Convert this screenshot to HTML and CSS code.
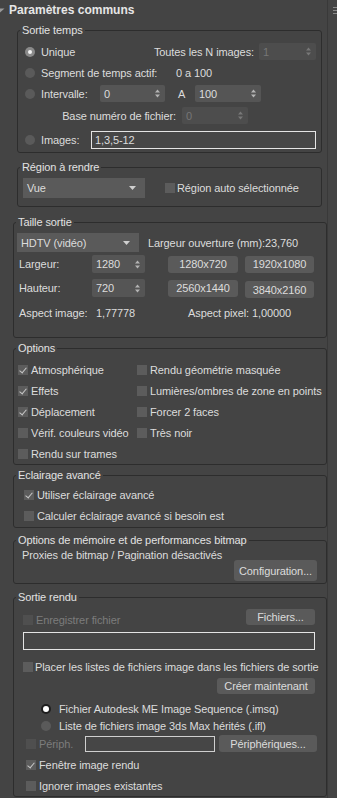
FILE: index.html
```html
<!DOCTYPE html>
<html lang="fr">
<head>
<meta charset="utf-8">
<title>Paramètres communs</title>
<link rel="stylesheet" href="styles.css">
</head>
<body>
<div class="panel">
  <div class="main">
    <div class="roll-head">
      <svg class="tri" width="5" height="5" viewBox="0 0 5 5"><path d="M0 0.5 L4.5 0.5 L0 4.5 Z" fill="#9a9a9a"/></svg>
      <span class="roll-title">Paramètres communs</span>
    </div>

    <fieldset class="grp narrow">
      <legend>Sortie temps</legend>
      <div class="gbody time">
        <div class="row h21">
          <span class="radio soft"></span><span class="lbl">Unique</span>
          <span class="push">Toutes les N images:</span>
          <span class="spin dis w57"><span class="val">1</span><svg class="arr" width="5" height="9" viewBox="0 0 5 9"><path d="M0 3.5 L2.5 0.5 L5 3.5 Z M0 5.5 L2.5 8.5 L5 5.5 Z"/></svg></span>
        </div>
        <div class="row h21">
          <span class="radio"></span><span class="lbl w135">Segment de temps actif:</span>
          <span>0 a 100</span>
        </div>
        <div class="row h21">
          <span class="radio"></span><span class="lbl w59">Intervalle:</span>
          <span class="spin w65"><span class="val">0</span><svg class="arr" width="5" height="9" viewBox="0 0 5 9"><path d="M0 3.5 L2.5 0.5 L5 3.5 Z M0 5.5 L2.5 8.5 L5 5.5 Z"/></svg></span>
          <span class="a-lbl">A</span>
          <span class="spin w66"><span class="val">100</span><svg class="arr" width="5" height="9" viewBox="0 0 5 9"><path d="M0 3.5 L2.5 0.5 L5 3.5 Z M0 5.5 L2.5 8.5 L5 5.5 Z"/></svg></span>
        </div>
        <div class="row h23 base">
          <span class="base-lbl">Base numéro de fichier:</span>
          <span class="spin dis w66"><span class="val">0</span><svg class="arr" width="5" height="9" viewBox="0 0 5 9"><path d="M0 3.5 L2.5 0.5 L5 3.5 Z M0 5.5 L2.5 8.5 L5 5.5 Z"/></svg></span>
        </div>
        <div class="row img-row">
          <span class="radio"></span><span class="lbl w50">Images:</span>
          <span class="field grow">1,3,5-12</span>
        </div>
      </div>
    </fieldset>

    <fieldset class="grp narrow g-region">
      <legend>Région à rendre</legend>
      <div class="gbody region">
        <div class="row">
          <span class="drop w122">Vue<svg class="dd" width="7" height="4" viewBox="0 0 7 4"><path d="M0 0 L7 0 L3.5 4 Z"/></svg></span>
          <span class="check region-check"></span><span class="clbl">Région auto sélectionnée</span>
        </div>
      </div>
    </fieldset>

    <fieldset class="grp wide g-size">
      <legend>Taille sortie</legend>
      <div class="gbody size">
        <div class="row">
          <span class="drop w122 h19">HDTV (vidéo)<svg class="dd" width="7" height="4" viewBox="0 0 7 4"><path d="M0 0 L7 0 L3.5 4 Z"/></svg></span>
          <span class="aperture">Largeur ouverture (mm):23,760</span>
        </div>
        <div class="size-grid r-w">
          <span>Largeur:</span>
          <span class="spin"><span class="val">1280</span><svg class="arr" width="5" height="9" viewBox="0 0 5 9"><path d="M0 3.5 L2.5 0.5 L5 3.5 Z M0 5.5 L2.5 8.5 L5 5.5 Z"/></svg></span>
          <span></span>
          <span class="btn">1280x720</span>
          <span></span>
          <span class="btn">1920x1080</span>
        </div>
        <div class="size-grid r-h">
          <span>Hauteur:</span>
          <span class="spin"><span class="val">720</span><svg class="arr" width="5" height="9" viewBox="0 0 5 9"><path d="M0 3.5 L2.5 0.5 L5 3.5 Z M0 5.5 L2.5 8.5 L5 5.5 Z"/></svg></span>
          <span></span>
          <span class="btn">2560x1440</span>
          <span></span>
          <span class="btn low">3840x2160</span>
        </div>
        <div class="row aspect">
          <span class="asp-lbl">Aspect image:</span><span class="asp-val">1,77778</span>
          <span>Aspect pixel: 1,00000</span>
        </div>
      </div>
    </fieldset>

    <fieldset class="grp wide g-opt">
      <legend>Options</legend>
      <div class="gbody opts">
        <div class="opt-grid">
          <span class="citem"><span class="check on"></span>Atmosphérique</span>
          <span class="citem"><span class="check"></span>Rendu géométrie masquée</span>
          <span class="citem"><span class="check on"></span>Effets</span>
          <span class="citem"><span class="check"></span>Lumières/ombres de zone en points</span>
          <span class="citem"><span class="check on"></span>Déplacement</span>
          <span class="citem"><span class="check"></span>Forcer 2 faces</span>
          <span class="citem"><span class="check"></span>Vérif. couleurs vidéo</span>
          <span class="citem"><span class="check"></span>Très noir</span>
          <span class="citem"><span class="check"></span>Rendu sur trames</span>
        </div>
      </div>
    </fieldset>

    <fieldset class="grp wide g-adv">
      <legend>Eclairage avancé</legend>
      <div class="gbody adv">
        <span class="citem"><span class="check on"></span>Utiliser éclairage avancé</span>
        <span class="citem"><span class="check"></span>Calculer éclairage avancé si besoin est</span>
      </div>
    </fieldset>

    <fieldset class="grp wide g-mem">
      <legend>Options de mémoire et de performances bitmap</legend>
      <div class="gbody mem">
        <div class="mem-text">Proxies de bitmap / Pagination désactivés</div>
        <span class="btn cfg">Configuration...</span>
      </div>
    </fieldset>

    <fieldset class="grp wide g-out">
      <legend>Sortie rendu</legend>
      <div class="gbody out">
        <div class="row save-row">
          <span class="citem disabled"><span class="check dis"></span>Enregistrer fichier</span>
          <span class="btn files">Fichiers...</span>
        </div>
        <div class="field path"></div>
        <span class="citem place"><span class="check"></span>Placer les listes de fichiers image dans les fichiers de sortie</span>
        <div class="row create-row"><span class="btn create">Créer maintenant</span></div>
        <div class="row rad-row"><span class="radio strong"></span><span>Fichier Autodesk ME Image Sequence (.imsq)</span></div>
        <div class="row rad-row"><span class="radio"></span><span>Liste de fichiers image 3ds Max hérités (.ifl)</span></div>
        <div class="row dev-row">
          <span class="citem disabled dev"><span class="check dis"></span>Périph.</span>
          <span class="field dev-field"></span>
          <span class="btn devs">Périphériques...</span>
        </div>
        <span class="citem last"><span class="check on"></span>Fenêtre image rendu</span>
        <span class="citem last"><span class="check"></span>Ignorer images existantes</span>
      </div>
    </fieldset>
  </div>
  <div class="side">
    <svg class="grip" width="4" height="7" viewBox="0 0 4 7"><path d="M0 0.5 H4 M0 3.5 H4 M0 6.5 H4" stroke="#8a8a8a" stroke-width="1"/></svg>
  </div>
</div>
</body>
</html>
```

FILE: styles.css
```css
* { box-sizing: border-box; }

html, body {
  margin: 0;
  padding: 0;
  background: #444444;
}

body {
  font-family: "Liberation Sans", Arial, sans-serif;
  font-size: 11px;
  line-height: 14px;
  letter-spacing: -0.1px;
  color: #dcdcdc;
  overflow: hidden;
}

.panel {
  display: flex;
  width: 337px;
  height: 798px;
}

.main {
  width: 328px;
  border-right: 1px solid #393939;
  display: flex;
  flex-direction: column;
}

.side {
  flex: 1;
  display: flex;
  justify-content: flex-end;
  padding-top: 7px;
}

.grip { display: block; }

.roll-head {
  height: 23px;
  padding-top: 3px;
  display: flex;
  align-items: flex-start;
}

.tri { margin-top: 5px; margin-left: 0; }

.roll-title {
  margin-left: 4px;
  font-weight: bold;
  font-size: 12px;
  letter-spacing: 0;
  color: #e6e6e6;
}

/* group boxes */
.grp {
  margin: 0;
  padding: 0;
  border: 1px solid #2d2d2d;
  border-radius: 3px;
  min-width: 0;
}

.grp legend {
  margin-left: 2px;
  padding: 0 2px;
  line-height: 14px;
  color: #e2e2e2;
}

.narrow { margin-left: 17px; width: 305px; }
.wide { margin-left: 13px; width: 314px; }

.g-region { margin-top: 7px; }
.g-size { margin-top: 8px; }
.g-opt { margin-top: 3px; }
.g-adv { margin-top: 3px; }
.g-mem { margin-top: 5px; }
.g-out { margin-top: 6px; }

.gbody { display: flex; flex-direction: column; }

.row { display: flex; align-items: center; }
.h21 { height: 21px; }
.h23 { height: 23px; }

/* radios */
.radio {
  width: 10px;
  height: 10px;
  border-radius: 50%;
  background: #5a5a5a;
  margin-right: 6px;
  flex: none;
  position: relative;
}
.radio.soft { background: #8a8a8a; }
.radio.soft::after {
  content: "";
  position: absolute;
  left: 3px; top: 3px;
  width: 4px; height: 4px;
  border-radius: 50%;
  background: #f4f4f4;
}
.radio.strong { background: #1e1e1e; }
.radio.strong::after {
  content: "";
  position: absolute;
  left: 2px; top: 2px;
  width: 6px; height: 6px;
  border-radius: 50%;
  background: #ffffff;
}

/* checkboxes */
.check {
  width: 10px;
  height: 10px;
  background: #5c5c5c;
  flex: none;
  position: relative;
}
.check.dis { background: #4f4f4f; }
.check.on::after {
  content: "";
  position: absolute;
  left: 3px;
  top: 1px;
  width: 3px;
  height: 6px;
  border: solid #c8c8c8;
  border-width: 0 1.5px 1.5px 0;
  transform: rotate(40deg);
}

.citem {
  display: flex;
  align-items: center;
  gap: 3px;
  white-space: nowrap;
}
.citem.disabled { color: #7c7c7c; }

/* spinners */
.spin {
  display: flex;
  align-items: center;
  justify-content: space-between;
  height: 17px;
  background: #555555;
  border-radius: 2px;
  padding: 0 5px 0 4px;
  flex: none;
}
.spin .arr { fill: #b4b4b4; }
.spin.dis { background: #4d4d4d; color: #767676; }
.spin.dis .arr { fill: #787878; }

.w57 { width: 57px; }
.w65 { width: 65px; }
.w66 { width: 66px; }
.w135 { width: 135px; }
.w59 { width: 59px; }
.w50 { width: 50px; }
.w122 { width: 122px; }

.lbl { flex: none; }
.push { margin-left: auto; margin-right: 5px; }

.field {
  display: flex;
  align-items: center;
  height: 18px;
  border: 1px solid #e4e4e4;
  background: #464646;
  padding-left: 3px;
}
.grow { flex: 1; }

/* sortie temps */
.time { padding: 4px 5px 3px 7px; }
.a-lbl { width: 17px; padding-left: 13px; flex: none; box-sizing: content-box; }
.base-lbl { width: 158px; text-align: right; margin-right: 6px; margin-left: 0; }
.base { margin-left: -7px; }
.img-row { margin-top: 4px; }

/* dropdowns */
.drop {
  display: flex;
  align-items: center;
  justify-content: space-between;
  height: 20px;
  background: #5a5a5a;
  padding: 0 9px 0 4px;
  flex: none;
}
.drop.h19 { height: 19px; }
.dd { fill: #cfcfcf; }

.region { padding: 4px 6px 8px 5px; }
.region-check { margin-left: 20px; margin-right: 2px; }

/* taille sortie */
.size { padding: 4px 6px 17px 3px; }
.aperture { margin-left: 9px; }
.size-grid {
  display: grid;
  grid-template-columns: 73px 53px 23px 70px 7px 69px;
  align-items: center;
  margin-left: 2px;
}
.r-w { margin-top: 3px; height: 18px; }
.r-h { margin-top: 5px; height: 18px; }
.size-grid .spin { height: 18px; }

.btn {
  display: flex;
  align-items: center;
  justify-content: center;
  height: 17px;
  background: #5a5a5a;
  border-radius: 3px;
  color: #dcdcdc;
  white-space: nowrap;
}
.btn.low { margin-top: 3px; }

.aspect { margin-top: 10px; margin-left: 2px; }
.asp-lbl { width: 77px; }
.asp-val { width: 92px; }

/* options */
.opts { padding: 4px 4px 0 4px; }
.opt-grid {
  display: grid;
  grid-template-columns: 119px auto;
  grid-auto-rows: 21px;
  align-items: center;
}

.adv { padding: 2px 4px 1px 10px; }
.adv .citem { height: 21px; }

/* memory */
.mem { padding: 2px 9px 2px 8px; }
.mem-text { line-height: 13px; }
.cfg { align-self: flex-end; width: 83px; height: 21px; margin-top: -2px; }

/* sortie rendu */
.out { padding: 5px 11px 0 9px; }
.save-row { height: 18px; align-items: flex-start; justify-content: space-between; }
.save-row .citem { align-self: flex-end; }
.files { width: 69px; height: 16px; }
.path { margin-top: 5px; height: 18px; }
.place { margin-top: 10px; height: 14px; margin-left: 0; gap: 2px; }
.create-row { justify-content: flex-end; margin-top: 4px; }
.create { width: 98px; height: 16px; }
.rad-row { height: 17px; margin-left: 18px; }
.rad-row .radio { margin-right: 8px; }
.create-row + .rad-row { margin-top: 6px; }
.dev-row { height: 17px; margin-top: 1px; margin-right: -2px; }
.dev { margin-left: 3px; width: 59px; }
.dev-field { width: 130px; height: 16px; border-color: #cfcfcf; }
.devs { width: 98px; margin-left: auto; height: 17px; }
.last { height: 21px; margin-left: 3px; }
.dev-row + .last { margin-top: 2px; }
```
